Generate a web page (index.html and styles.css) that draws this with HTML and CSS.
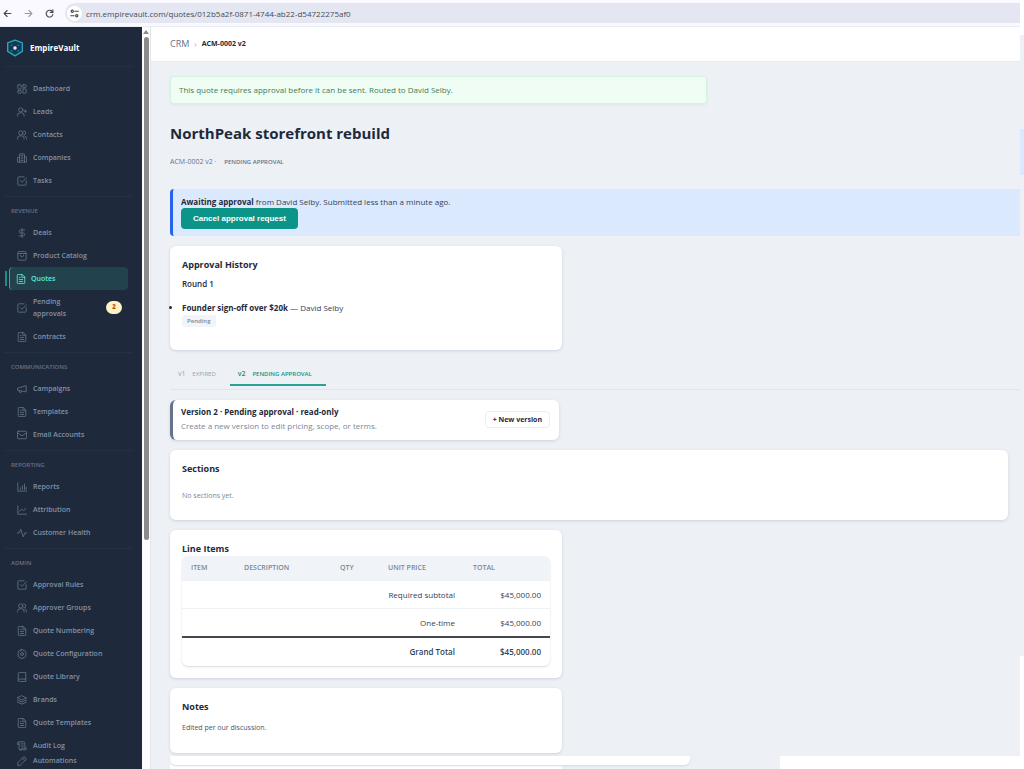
FILE: index.html
```html
<!DOCTYPE html>
<html lang="en">
<head>
  <meta charset="UTF-8">
  <meta name="viewport" content="width=device-width, initial-scale=1.0">
  <title>ACM-0002 v2 - EmpireVault</title>
  <link rel="stylesheet" href="styles.css">
</head>
<body>
  <!-- icon set -->
  <svg class="sprite" aria-hidden="true">
    <symbol id="dashboard" viewBox="0 0 24 24"><rect x="2" y="2" width="8" height="10" rx="1"/><rect x="14" y="2" width="8" height="6" rx="1"/><rect x="14" y="12" width="8" height="10" rx="1"/><rect x="2" y="16" width="8" height="6" rx="1"/></symbol>
    <symbol id="lead" viewBox="0 0 24 24"><path d="M1 22v-2a6 6 0 0 1 6-6h4a6 6 0 0 1 6 6v2"/><circle cx="9" cy="7" r="5"/><path d="M20 7v6M17 10h6"/></symbol>
    <symbol id="users" viewBox="0 0 24 24"><path d="M1 22v-2a6 6 0 0 1 6-6h4a6 6 0 0 1 6 6v2"/><circle cx="9" cy="7" r="5"/><path d="M16 2a5 5 0 0 1 0 10M23 22v-2a6 6 0 0 0-4-5.600"/></symbol>
    <symbol id="building" viewBox="0 0 24 24"><path d="M6 22V3a1 1 0 0 1 1-1h10a1 1 0 0 1 1 1v19M6 11H2a1 1 0 0 0-1 1v10h22V10a1 1 0 0 0-1-1h-4M10 6h4M10 10h4M10 14h4M10 18h4"/></symbol>
    <symbol id="check" viewBox="0 0 24 24"><path d="M22 11v9a2 2 0 0 1-2 2H4a2 2 0 0 1-2-2V4a2 2 0 0 1 2-2h13"/><path d="m8 11 4 4L23 4"/></symbol>
    <symbol id="dollar" viewBox="0 0 24 24"><path d="M12 1v22M18 5H9a3.500 3.500 0 0 0 0 7h6a3.500 3.500 0 0 1 0 7H5"/></symbol>
    <symbol id="bag" viewBox="0 0 24 24"><path d="M5 1h14l3 4v15a2 2 0 0 1-2 2H4a2 2 0 0 1-2-2V5zM2 6h20M16 10a4 4 0 0 1-8 0"/></symbol>
    <symbol id="file" viewBox="0 0 24 24"><path d="M14 1H5a2 2 0 0 0-2 2v18a2 2 0 0 0 2 2h14a2 2 0 0 0 2-2V8zM14 1v7h7M8 13h8M8 18h8M8 8h2"/></symbol>
    <symbol id="horn" viewBox="0 0 24 24"><path d="m2 10 20-6v15L2 15zM11 18a3 3 0 0 1-6-1"/></symbol>
    <symbol id="mail" viewBox="0 0 24 24"><rect x="1" y="3" width="22" height="18" rx="2"/><path d="m1 7 11 7 11-7"/></symbol>
    <symbol id="bars" viewBox="0 0 24 24"><path d="M2 2v20h21M8 18v-4M13 18V9M18 18V5M22 18v-6"/></symbol>
    <symbol id="trend" viewBox="0 0 24 24"><path d="M2 2v20h21M21 8l-5 6-4-4-6 5"/></symbol>
    <symbol id="pulse" viewBox="0 0 24 24"><path d="M23 12h-4l-4 9L9 3l-4 9H1"/></symbol>
    <symbol id="gear" viewBox="0 0 24 24"><circle cx="12" cy="12" r="3.500"/><path d="m9.500 1.500h5l1 3 3-1 3 4-1 3 2 1.500-2 2 1 3-3 4-3-1-1 3h-5l-1-3-3 1-3-4 1-3-2-2 2-1.500-1-3 3-4 3 1z"/></symbol>
    <symbol id="book" viewBox="0 0 24 24"><path d="M3 20V4a3 3 0 0 1 3-3h15v22H6a3 3 0 0 1 0-6h15"/></symbol>
    <symbol id="layers" viewBox="0 0 24 24"><path d="m12 2 11 5-11 5L1 7zM1 12l11 5 11-5M1 17l11 5 11-5"/></symbol>
    <symbol id="scroll" viewBox="0 0 24 24"><path d="M19 17V5a3 3 0 0 0-3-3H4M8 21h12a3 3 0 0 0 3-3v-1H11v2a3 3 0 0 1-6 0V5a2 2 0 0 0-4 0v3h4M10 7h5M10 12h5"/></symbol>
    <symbol id="pen" viewBox="0 0 24 24"><path d="M2 22v-6L16 2q3-1 6 6L8 22zM13 5l6 6"/></symbol>
  </svg>

  <header class="browser">
    <button class="nav-btn" aria-label="Back"><svg viewBox="0 0 24 24"><path d="M21 12H4M11 4l-8 8 8 8"/></svg></button>
    <button class="nav-btn dim" aria-label="Forward"><svg viewBox="0 0 24 24"><path d="M3 12h17M13 4l8 8-8 8"/></svg></button>
    <button class="nav-btn" aria-label="Reload"><svg viewBox="0 0 24 24"><path d="M20 8a9 9 0 1 0 1 6M21 2v7h-7"/></svg></button>
    <div class="address">
      <span class="site-info"><svg viewBox="0 0 24 24"><circle cx="6" cy="6" r="3"/><path d="M13 6h9M2 18h9"/><circle cx="18" cy="18" r="3"/></svg></span>
      <input type="text" aria-label="Address" value="crm.empirevault.com/quotes/012b5a2f-0871-4744-ab22-d54722275af0">
    </div>
  </header>

  <div class="app">
    <aside class="sidebar">
      <a class="brand" href="#">
        <svg viewBox="0 0 32 32"><path d="M16 2 29 7v15L16 30 3 22V7z" fill="#123852" stroke="#2aa5bd" stroke-width="2.500"/><circle cx="16" cy="16" r="2" fill="#43c9dc"/><path d="M9 11h2M21 11h2M9 21h2M21 21h2" stroke="#2387a6" stroke-width="2"/></svg>
        <span>EmpireVault</span>
      </a>
      <nav>
        <section>
          <a href="#"><svg><use href="#dashboard"/></svg>Dashboard</a>
          <a href="#"><svg><use href="#lead"/></svg>Leads</a>
          <a href="#"><svg><use href="#users"/></svg>Contacts</a>
          <a href="#"><svg><use href="#building"/></svg>Companies</a>
          <a href="#"><svg><use href="#check"/></svg>Tasks</a>
        </section>
        <section>
          <h2>REVENUE</h2>
          <a href="#"><svg><use href="#dollar"/></svg>Deals</a>
          <a href="#"><svg><use href="#bag"/></svg>Product Catalog</a>
          <a href="#" class="active"><svg><use href="#file"/></svg>Quotes</a>
          <a href="#" class="tall"><svg><use href="#check"/></svg><span>Pending approvals</span><b class="count">2</b></a>
          <a href="#"><svg><use href="#file"/></svg>Contracts</a>
        </section>
        <section>
          <h2>COMMUNICATIONS</h2>
          <a href="#"><svg><use href="#horn"/></svg>Campaigns</a>
          <a href="#"><svg><use href="#file"/></svg>Templates</a>
          <a href="#"><svg><use href="#mail"/></svg>Email Accounts</a>
        </section>
        <section>
          <h2>REPORTING</h2>
          <a href="#"><svg><use href="#bars"/></svg>Reports</a>
          <a href="#"><svg><use href="#trend"/></svg>Attribution</a>
          <a href="#"><svg><use href="#pulse"/></svg>Customer Health</a>
        </section>
        <section>
          <h2>ADMIN</h2>
          <a href="#"><svg><use href="#check"/></svg>Approval Rules</a>
          <a href="#"><svg><use href="#users"/></svg>Approver Groups</a>
          <a href="#"><svg><use href="#file"/></svg>Quote Numbering</a>
          <a href="#"><svg><use href="#gear"/></svg>Quote Configuration</a>
          <a href="#"><svg><use href="#book"/></svg>Quote Library</a>
          <a href="#"><svg><use href="#layers"/></svg>Brands</a>
          <a href="#"><svg><use href="#file"/></svg>Quote Templates</a>
          <a href="#"><svg><use href="#scroll"/></svg>Audit Log</a>
          <a href="#" class="short"><svg><use href="#pen"/></svg>Automations</a>
        </section>
      </nav>
    </aside>
    <div class="scrollbar"><i class="arrow"></i><i class="thumb"></i></div>

    <main>
      <div class="crumbs"><a href="#">CRM</a><span>›</span><strong>ACM-0002 v2</strong></div>
      <div class="content">
        <div class="alert">This quote requires approval before it can be sent. Routed to David Selby.</div>
        <h1>NorthPeak storefront rebuild</h1>
        <p class="meta">ACM-0002 v2 · <span>PENDING APPROVAL</span></p>

        <div class="awaiting">
          <p><strong>Awaiting approval</strong> from David Selby. Submitted less than a minute ago.</p>
          <button class="primary">Cancel approval request</button>
        </div>

        <div class="card history">
          <h3>Approval History</h3>
          <h4>Round 1</h4>
          <ul>
            <li><strong>Founder sign-off over $20k</strong> — David Selby<br><span class="tag">Pending</span></li>
          </ul>
        </div>

        <div class="tabs">
          <a href="#">v1 <span>EXPIRED</span></a>
          <a href="#" class="current">v2 <span>PENDING APPROVAL</span></a>
        </div>

        <div class="card version">
          <div>
            <h3>Version 2 · Pending approval · read-only</h3>
            <p>Create a new version to edit pricing, scope, or terms.</p>
          </div>
          <button class="secondary">+ New version</button>
        </div>

        <div class="card sections">
          <h3>Sections</h3>
          <p>No sections yet.</p>
        </div>

        <div class="card items">
          <h3>Line Items</h3>
          <table>
            <thead>
              <tr><th class="c-item">ITEM</th><th class="c-desc">DESCRIPTION</th><th class="c-qty">QTY</th><th class="c-price">UNIT PRICE</th><th>TOTAL</th></tr>
            </thead>
            <tbody>
              <tr><td colspan="4">Required subtotal</td><td>$45,000.00</td></tr>
              <tr><td colspan="4">One-time</td><td>$45,000.00</td></tr>
              <tr class="grand"><td colspan="4">Grand Total</td><td>$45,000.00</td></tr>
            </tbody>
          </table>
        </div>

        <div class="card notes">
          <h3>Notes</h3>
          <p>Edited per our discussion.</p>
        </div>
      </div>
      <div class="bottom"><div class="next-card"><div class="next-table"></div></div><div class="blank"></div></div>
    </main>
    <div class="edge"><i class="edge-blue"></i><i class="edge-white"></i></div>
  </div>
</body>
</html>
```
FILE: styles.css
```css
* {
  box-sizing: border-box;
}
body {
  margin: 0;
  height: 100vh;
  display: flex;
  flex-direction: column;
  overflow: hidden;
  font-family: "Open Sans", "Noto Sans", sans-serif;
  font-size: 8px;
  line-height: 12px;
  color: #1e293b;
  background: #fff;
}
h1, h2, h3, h4, p, ul {
  margin: 0;
}
a {
  color: inherit;
  text-decoration: none;
}
button, input {
  border: 0;
  padding: 0;
  font-family: inherit;
}
button {
  cursor: pointer;
}
svg {
  fill: none;
  stroke: currentColor;
  stroke-width: 2;
  stroke-linecap: round;
  stroke-linejoin: round;
  flex-shrink: 0;
}
.sprite {
  display: none;
}

/* browser bar */
.browser {
  height: 27px;
  flex-shrink: 0;
  display: flex;
  align-items: center;
  gap: 10px;
  padding-left: 2px;
  margin-right: 4px;
  background: #f9f9ff;
  border-bottom: 1px solid #e9ebf2;
}
.nav-btn {
  width: 11px;
  height: 11px;
  background: none;
  color: #474b52;
}
.nav-btn svg {
  display: block;
  width: 11px;
  height: 11px;
  padding: 1px;
  stroke-width: 3;
}
.nav-btn.dim {
  color: #9b9ea5;
}
.address {
  flex: 1;
  height: 20px;
  display: flex;
  align-items: center;
  gap: 4px;
  padding-left: 2px;
  background: #e4e7f2;
  border-radius: 10px 0 0 10px;
}
.site-info {
  width: 15px;
  height: 15px;
  padding: 3px;
  border-radius: 50%;
  background: #fff;
  color: #444;
}
.site-info svg {
  display: block;
  width: 9px;
  height: 9px;
  stroke-width: 3;
}
.address input {
  flex: 1;
  background: none;
  font-size: 8px;
  color: #474b52;
}

.app {
  flex: 1;
  min-height: 0;
  display: flex;
}

/* sidebar */
.sidebar {
  width: 142px;
  flex-shrink: 0;
  background: #1e293b;
  color: #8491a5;
  overflow: hidden;
}
.brand {
  height: 40px;
  margin: 0 9px 0 4px;
  display: flex;
  align-items: center;
  gap: 6px;
  padding: 3px 0 0 2px;
  border-bottom: 1px solid #243145;
  color: #fff;
  font-size: 8px;
  font-weight: 700;
}
.brand svg {
  width: 18px;
  height: 18px;
}
nav {
  padding-top: 10px;
}
nav section + section {
  margin-top: 4px;
}
nav h2 {
  margin: 0 9px 0 4px;
  height: 25px;
  padding: 8px 0 0 7px;
  border-top: 1px solid #243145;
  font-size: 6px;
  font-weight: 600;
  color: #667387;
}
nav a {
  height: 23px;
  display: flex;
  align-items: center;
  gap: 6px;
  padding-left: 17px;
  font-size: 7px;
  font-weight: 600;
}
nav a svg {
  width: 10px;
  height: 10px;
  color: #64748b;
}
nav .active {
  position: relative;
  gap: 5px;
  margin: 0 14px 0 9px;
  padding-left: 6px;
  border-left: 1px solid #14b8a6;
  border-radius: 4px;
  background: #22434d;
  color: #5eead4;
}
/* marker bar beside the active link */
nav .active::before {
  content: "";
  position: absolute;
  left: -5px;
  top: 4px;
  bottom: 4px;
  width: 2px;
  background: #0d9488;
}
nav .active svg {
  color: #5eead4;
}
nav .tall {
  height: 35px;
  padding-right: 20px;
}
.tall span {
  width: 52px;
}
.count {
  width: 16px;
  height: 13px;
  margin-left: auto;
  border-radius: 7px;
  background: #fef3c7;
  color: #b45309;
  font-size: 6px;
  text-align: center;
}
nav .short {
  height: 8px;
}

.scrollbar {
  width: 9px;
  flex-shrink: 0;
  display: flex;
  flex-direction: column;
  align-items: center;
  gap: 3px;
  padding-top: 3px;
  background: #fcfcfc;
  border-right: 1px solid #e2e5ea;
}
.arrow {
  border: 3px solid transparent;
  border-top: 0;
  border-bottom: 4px solid #8b8b8b;
}
.thumb {
  width: 5px;
  height: 68%;
  border-radius: 3px;
  background: #8b8b8b;
}

/* main column */
main {
  flex: 1;
  min-width: 0;
  display: flex;
  flex-direction: column;
  background: #edf0f5;
}
.crumbs {
  height: 35px;
  flex-shrink: 0;
  display: flex;
  align-items: center;
  gap: 5px;
  padding-left: 19px;
  background: #fff;
  border-bottom: 1px solid #e8ebf0;
}
.crumbs a {
  font-size: 9px;
  color: #64748b;
}
.crumbs span {
  color: #94a3b8;
}
.crumbs strong {
  font-size: 7px;
}
.content {
  flex: 1;
  min-height: 0;
  padding: 14px 0 0 19px;
}
.alert {
  max-width: 537px;
  padding: 7px 8px;
  border: 1px solid #d3f5e0;
  border-radius: 4px;
  background: #effdf4;
  color: #3c7d57;
  box-shadow: 0 1px 2px #dfe5e8;
}
h1 {
  margin-top: 17px;
  font-size: 15px;
  line-height: 24px;
}
.meta {
  margin-top: 11px;
  font-size: 7px;
  color: #64748b;
}
.meta span {
  margin-left: 6px;
  font-size: 6px;
  font-weight: 600;
}
.awaiting {
  height: 47px;
  margin-top: 21px;
  padding: 7px 8px;
  border-left: 3px solid #2563eb;
  border-radius: 4px 0 0 4px;
  background: #dbe9fe;
}
.awaiting p {
  color: #334155;
}
.awaiting strong {
  color: #1e293b;
}
.primary {
  display: block;
  height: 21px;
  padding: 0 12px;
  border-radius: 4px;
  background: #0d9488;
  color: #fff;
  font: bold 8px "Liberation Sans", Arial, sans-serif;
}
.card {
  max-width: 392px;
  padding: 12px;
  border-radius: 6px;
  background: #fff;
  box-shadow: 0 1px 3px #cbd2dc;
}
.card h3 {
  font-size: 9px;
  line-height: 14px;
}
.history {
  height: 104px;
  margin-top: 10px;
}
.history h4 {
  margin-top: 6px;
  font-weight: 600;
}
.history ul {
  margin-top: 12px;
  padding: 0;
}
.history li {
  color: #334155;
}
.history li strong,
.history li::marker {
  color: #1e293b;
}
.tag {
  display: inline-block;
  padding: 0 5px;
  border-radius: 2px;
  background: #f1f5f9;
  color: #7b8798;
  font-size: 6px;
  font-weight: 600;
}
.tabs {
  height: 28px;
  margin-top: 12px;
  display: flex;
  align-items: flex-start;
  border-bottom: 1px solid #e0e5eb;
}
.tabs a {
  height: 24px;
  padding: 6px 14px 0 8px;
  font-size: 7px;
  color: #94a3b8;
}
.tabs span {
  margin-left: 5px;
  font-size: 6px;
}
.tabs .current {
  border-bottom: 2px solid #2aa294;
  color: #0d9488;
  font-weight: 600;
}
.version {
  max-width: 389px;
  height: 40px;
  margin-top: 10px;
  padding: 5px 9px 7px 8px;
  display: flex;
  justify-content: space-between;
  align-items: center;
  border-left: 3px solid #64748b;
}
.version h3 {
  font-size: 8px;
}
.version p {
  line-height: 14px;
  color: #7b8798;
}
.secondary {
  height: 17px;
  padding: 0 7px;
  border: 1px solid #eceff3;
  border-radius: 4px;
  background: #fff;
  color: #1e293b;
  font-size: 7px;
  font-weight: 700;
}
.sections {
  max-width: none;
  height: 70px;
  margin: 10px 12px 0 0;
}
.sections p {
  margin-top: 14px;
  font-size: 7px;
  color: #7b8798;
}
.items {
  height: 148px;
  margin-top: 10px;
}
table {
  width: 100%;
  table-layout: fixed;
  border-collapse: separate;
  border-spacing: 0;
  border-radius: 6px;
  overflow: hidden;
  box-shadow: 0 1px 2px #d5dae1;
}
th {
  height: 24px;
  padding: 0 9px;
  background: #f0f4f9;
  text-align: left;
  font-size: 7px;
  font-weight: 600;
  color: #7b8798;
}
.c-item { width: 53px; }
.c-desc { width: 96px; }
.c-qty { width: 48px; }
.c-price { width: 85px; }
td {
  height: 28px;
  padding: 0 9px;
  border-top: 1px solid #eff2f5;
  text-align: right;
  color: #334155;
}
.grand td {
  height: 30px;
  border-top: 2px solid #44474d;
  font-weight: 600;
}
.notes {
  height: 65px;
  margin-top: 10px;
}
.notes p {
  margin-top: 8px;
  font-size: 7px;
  color: #475569;
}

/* start of the next block below the fold */
.bottom {
  height: 13px;
  flex-shrink: 0;
  display: flex;
  justify-content: space-between;
  padding-left: 19px;
}
.next-card {
  width: 392px;
  background: #fff;
}
.next-table {
  width: 520px;
  height: 9px;
  padding-left: 12px;
  border-radius: 0 0 6px 6px;
  background: #fff;
  box-shadow: 0 1px 2px #d5dae1;
}
.blank {
  width: 240px;
  background: #fff;
}
.edge {
  width: 4px;
  flex-shrink: 0;
  display: flex;
  flex-direction: column;
  justify-content: space-between;
  margin-top: 8px;
  padding-top: 94px;
  background: #edf0f5;
}
.edge-blue {
  height: 46px;
  background: #dbe9fe;
}
.edge-white {
  height: 113px;
  background: #fff;
}
```
